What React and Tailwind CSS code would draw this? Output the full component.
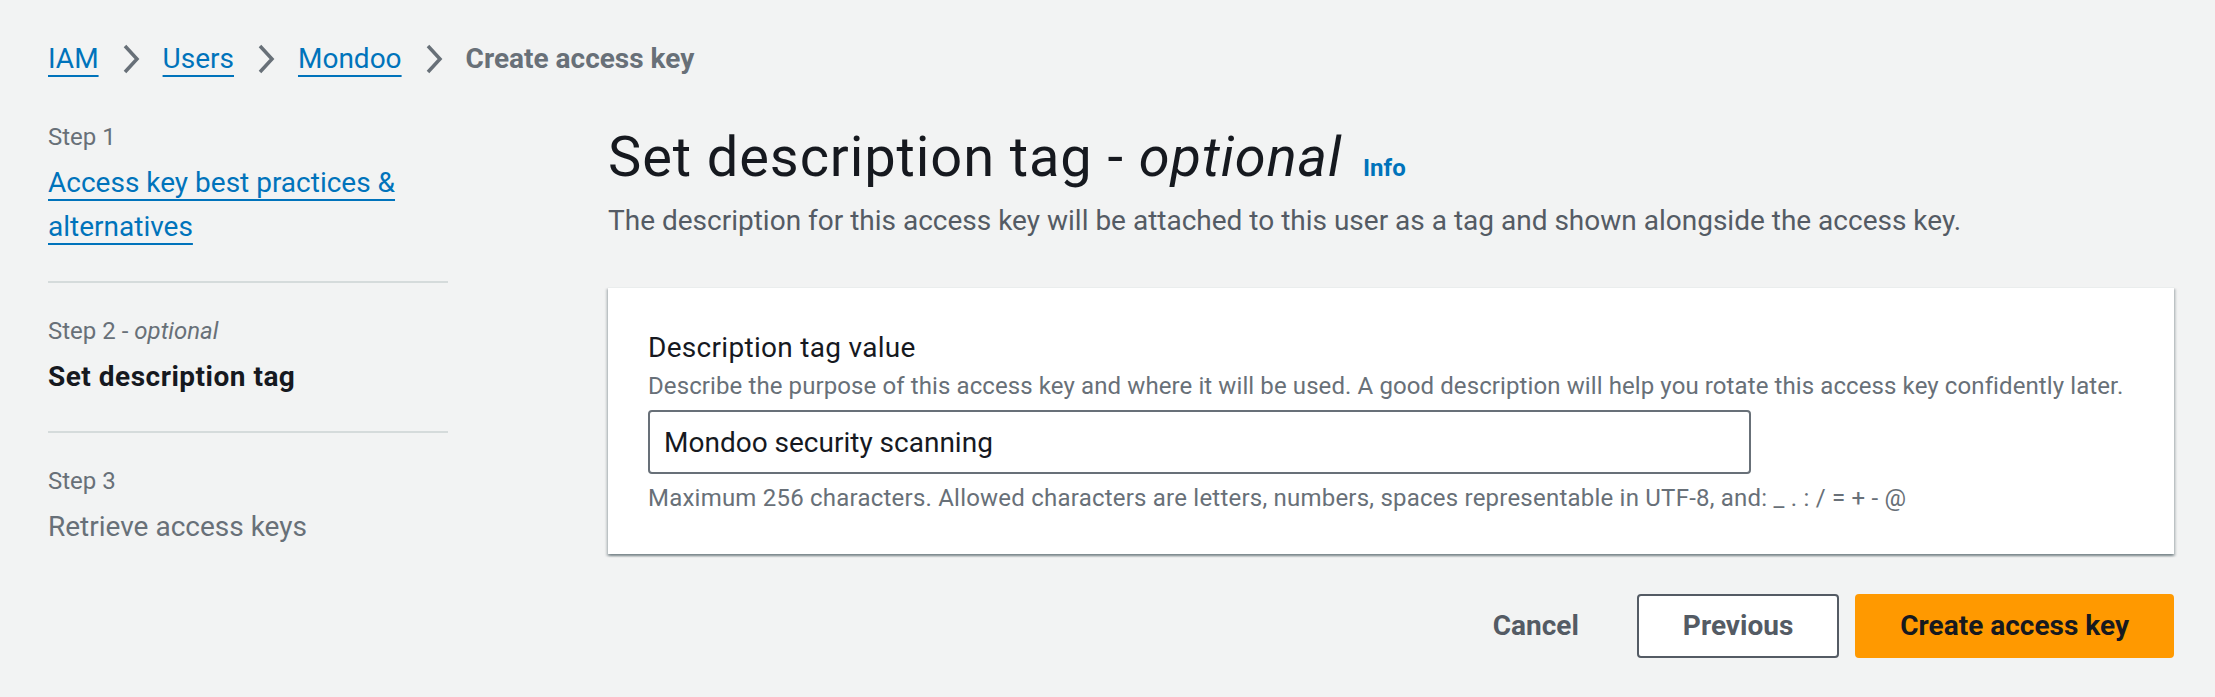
import React from 'react';

const Chevron = () => (
  <svg width="20" height="32" viewBox="0 0 20 32" fill="none" className="shrink-0">
    <polyline points="4,3 16,16 4,29" stroke="#687078" strokeWidth="3.5" strokeLinecap="butt" strokeLinejoin="miter" />
  </svg>
);

const Breadcrumbs = () => (
  <nav className="flex items-center gap-[22px] text-[28px] leading-[40px]">
    <a href="#" className="text-[#0073bb] underline decoration-2 underline-offset-[7px]">IAM</a>
    <Chevron />
    <a href="#" className="text-[#0073bb] underline decoration-2 underline-offset-[7px]">Users</a>
    <Chevron />
    <a href="#" className="text-[#0073bb] underline decoration-2 underline-offset-[7px]">Mondoo</a>
    <Chevron />
    <span className="font-bold text-[#687078]">Create access key</span>
  </nav>
);

const steps = [
  { label: 'Step 1', title: 'Access key best practices & alternatives', state: 'done' },
  { label: 'Step 2', optional: true, title: 'Set description tag', state: 'active' },
  { label: 'Step 3', title: 'Retrieve access keys', state: 'todo' },
];

const StepNav = () => (
  <ol className="flex flex-col">
    {steps.map((step, i) => (
      <li
        key={step.label}
        className={
          i < steps.length - 1
            ? 'pb-[32px] mb-[28px] border-b-2 border-[#d5dbdb]'
            : ''
        }
      >
        <div className="text-[24px] leading-[40px] text-[#687078]">
          {step.label}
          {step.optional && (
            <>
              {' - '}
              <i>optional</i>
            </>
          )}
        </div>
        <div className="mt-[4px] text-[28px] leading-[44px]">
          {step.state === 'done' && (
            <a href="#" className="text-[#0073bb] underline decoration-2 underline-offset-[7px]">
              {step.title}
            </a>
          )}
          {step.state === 'active' && (
            <span className="font-bold tracking-[0.5px] text-[#16191f]">{step.title}</span>
          )}
          {step.state === 'todo' && <span className="text-[#687078]">{step.title}</span>}
        </div>
      </li>
    ))}
  </ol>
);

export default function App() {
  return (
    <div
      className="min-h-screen bg-[#f2f3f3] pl-[48px] pr-[41px] pt-[39px] text-[#16191f]"
      style={{ fontFamily: 'Roboto, "Liberation Sans", sans-serif' }}
    >
      <Breadcrumbs />

      <div className="mt-[38px] grid grid-cols-[400px_1fr] gap-x-[160px]">
        <StepNav />

        <main className="flex flex-col">
          <div className="flex items-baseline">
            <h1 className="text-[56px] leading-[80px] font-normal tracking-[0.9px] text-[#16191f]">
              Set description tag - <i>optional</i>
            </h1>
            <a href="#" className="ml-[21px] text-[24px] leading-[32px] font-bold text-[#0073bb]">
              Info
            </a>
          </div>
          <p className="mt-[4px] text-[28px] leading-[40px] text-[#545b64]">
            The description for this access key will be attached to this user as a tag and shown alongside the access key.
          </p>

          <section className="mt-[46px] bg-white border-t border-[#eaeded] px-[40px] pt-[40px] pb-[40px] shadow-[0_2px_2px_0_rgba(0,28,36,0.3),2px_2px_2px_0_rgba(0,28,36,0.15),-2px_2px_2px_0_rgba(0,28,36,0.15)]">
            <label htmlFor="desc" className="block text-[28px] leading-[40px] tracking-[0.3px] text-[#16191f]">
              Description tag value
            </label>
            <p className="mt-[2px] whitespace-nowrap text-[24px] leading-[32px] tracking-[0.1px] text-[#687078]">
              Describe the purpose of this access key and where it will be used. A good description will help you rotate this access key confidently later.
            </p>
            <input
              id="desc"
              readOnly
              value="Mondoo security scanning"
              className="mt-[8px] block h-[64px] w-[1103px] rounded-[4px] border-2 border-[#687078] bg-white pl-[14px] text-[28px] leading-[40px] text-[#16191f] outline-none"
            />
            <p className="mt-[8px] text-[24px] leading-[32px] tracking-[0.22px] text-[#687078]">
              Maximum 256 characters. Allowed characters are letters, numbers, spaces representable in UTF-8, and: _ . : / = + - @
            </p>
          </section>

          <div className="mt-[40px] flex items-center justify-end gap-[16px]">
            <button className="h-[64px] rounded-[4px] border-2 border-transparent px-[40px] text-[28px] leading-[40px] font-bold text-[#545b64]">
              Cancel
            </button>
            <button className="h-[64px] rounded-[4px] border-2 border-[#545b64] bg-white px-[44px] text-[28px] leading-[40px] font-bold text-[#545b64]">
              Previous
            </button>
            <button className="h-[64px] rounded-[4px] border-2 border-[#ff9900] bg-[#ff9900] px-[43px] text-[28px] leading-[40px] font-bold text-[#16191f]">
              Create access key
            </button>
          </div>
        </main>
      </div>
    </div>
  );
}
